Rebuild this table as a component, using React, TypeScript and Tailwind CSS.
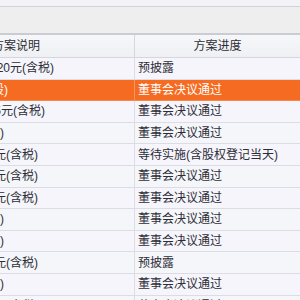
import React from 'react';

type Row = {
  desc: string;
  end: string; // where the (scrolled) description ends
  status: string;
  active?: boolean;
};

const rows: Row[] = [
  { desc: '10派1.20元(含税)', end: 'w-[54px]', status: '预披露' },
  { desc: '10转增4股(含1股)', end: 'w-[8px]', status: '董事会决议通过', active: true },
  { desc: '10派0.5元(含税)', end: 'w-[45px]', status: '董事会决议通过' },
  { desc: '10送2股(含税)', end: 'w-[4px]', status: '董事会决议通过' },
  { desc: '10派3元(含税)', end: 'w-[38px]', status: '等待实施(含股权登记当天)' },
  { desc: '10派2元(含税)', end: 'w-[38px]', status: '董事会决议通过' },
  { desc: '10派1元(含税)', end: 'w-[38px]', status: '董事会决议通过' },
  { desc: '10送1股(含税)', end: 'w-[4px]', status: '董事会决议通过' },
  { desc: '10送3股(含税)', end: 'w-[4px]', status: '董事会决议通过' },
  { desc: '10派5元(含税)', end: 'w-[38px]', status: '预披露' },
  { desc: '10送1股(含税)', end: 'w-[4px]', status: '董事会决议通过' },
  { desc: '10派2元(含税)', end: 'w-[38px]', status: '董事会决议通过' },
];

const font = "font-['Liberation_Sans','Noto_Sans_CJK_SC',sans-serif]";

export default function App() {
  return (
    <div className={`w-[300px] h-[300px] overflow-hidden bg-[#f5f4fb] text-[12px] leading-none text-[#2d2d36] ${font}`}>
      {/* toolbar strip */}
      <div className="h-[7px] bg-[#f3f3f7] border-b border-[#d2d2da]" />
      <div className="h-[28px] bg-[#eeeeef] border-b-2 border-[#cbcbd3]" />

      {/* header */}
      <div className="grid grid-cols-[135px_1fr] h-[23px] bg-gradient-to-b from-[#f6f7f9] to-[#eff0f3] border-b border-[#d6d6de]">
        <div className="flex items-center border-r border-[#d6d6de] overflow-hidden">
          <div className="flex justify-end w-[40px] whitespace-nowrap">方案说明</div>
        </div>
        <div className="flex items-center justify-center">方案进度</div>
      </div>

      {rows.map((r, i) => (
        <div
          key={i}
          className={`grid grid-cols-[135px_1fr] h-[21.6px] border-b ${
            r.active
              ? 'bg-[#f56b22] text-white border-[#f08a50]'
              : 'border-[#dcdce4] ' + (i % 2 === 0 ? 'bg-[#f6f5fc]' : 'bg-[#f4f6fa]')
          }`}
        >
          <div className={`flex items-center overflow-hidden border-r ${r.active ? 'border-[#f7975f]' : 'border-[#dcdce4]'}`}>
            <div className={`flex justify-end whitespace-nowrap ${r.end}`}>{r.desc}</div>
          </div>
          <div className="flex items-center pl-[3px] whitespace-nowrap">{r.status}</div>
        </div>
      ))}
    </div>
  );
}
